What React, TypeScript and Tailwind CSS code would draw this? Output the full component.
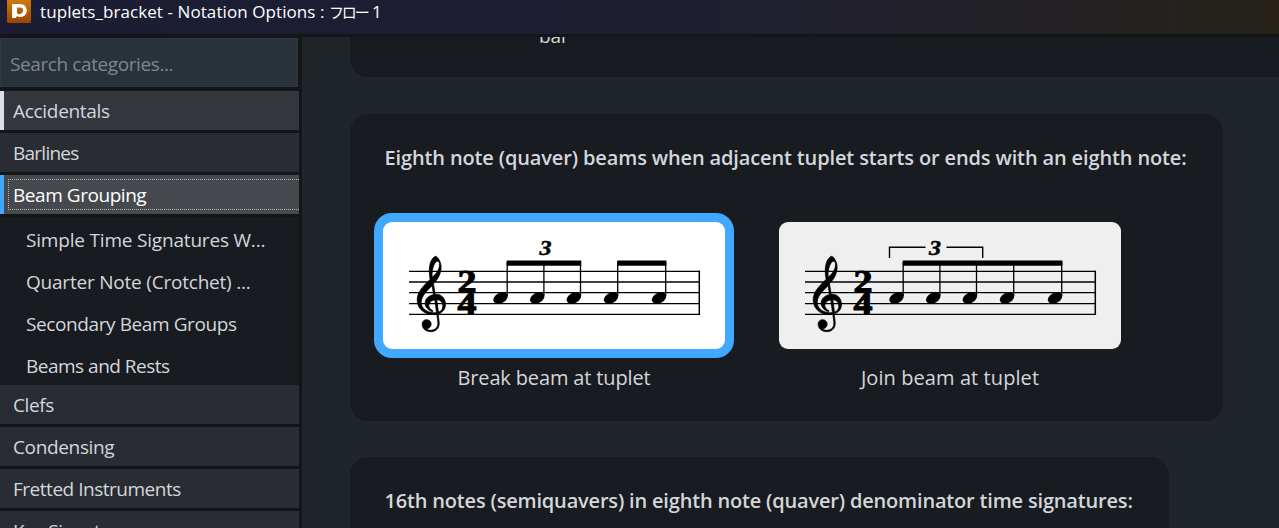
type Category = {
  name: string;
  className: string;
  children?: { name: string; className: string }[];
};

const categories: Category[] = [
  { name: "Accidentals", className: "tracking-[-0.3px]" },
  { name: "Barlines", className: "tracking-[-0.75px]" },
  {
    name: "Beam Grouping",
    className: "tracking-[-0.45px]",
    children: [
      { name: "Simple Time Signatures W...", className: "tracking-[-0.19px]" },
      { name: "Quarter Note (Crotchet) ...", className: "tracking-[-0.21px]" },
      { name: "Secondary Beam Groups", className: "tracking-[-0.4px]" },
      { name: "Beams and Rests", className: "tracking-[-0.5px]" },
    ],
  },
  { name: "Clefs", className: "tracking-[-0.4px]" },
  { name: "Condensing", className: "tracking-[-0.35px]" },
  { name: "Fretted Instruments", className: "tracking-[-0.48px]" },
  { name: "Key Signatures", className: "tracking-[-0.4px]" },
];

function AppLogo() {
  return (
    <svg width="24" height="24" viewBox="0 0 24 24" className="shrink-0">
      <defs>
        <linearGradient id="logo" x1="0" y1="0" x2="0" y2="1">
          <stop offset="0" stopColor="#d57a0d" />
          <stop offset="1" stopColor="#9c4300" />
        </linearGradient>
      </defs>
      <rect width="24" height="24" rx="1.5" fill="url(#logo)" />
      <path
        fillRule="evenodd"
        d="M5 5H13C17.200 5 19.800 7.800 19.800 11.500C19.800 15.300 17.200 18 13.200 18H12.200C11.400 18 10.700 17.600 10.200 17L8.600 19H5ZM10 8.500V13.500C10 14.700 10.900 15.300 11.900 15.200C14.500 15 16.200 13.400 16.200 11.300C16.200 9.500 15 8.500 13 8.500Z"
        fill="#fff"
      />
    </svg>
  );
}

function TrebleClef() {
  return (
    <g transform="translate(28.500 28) scale(0.3333)">
      <path
        fillRule="evenodd"
        stroke="currentColor"
        strokeWidth="2.200"
        d="M74 19C84 27 89 40 89 53C88 72 79 88 66 101L71 133C88 131 102 144 102 163C102 178 93 188 80 192L83 216C85 234 74 245 58 245C43 245 32 236 32 222C32 214 38 209 45 209C53 209 59 215 59 222C59 230 53 236 45 236.500C49 240 53 241 58 241C73 240 80 231 79 216L76 193C48 198 17 182 17 150C17 125 36 108 56 88C52 70 52 52 57 37C61 27 68 18 74 19ZM79 34C70 33 60 55 62 82C76 70 84 57 84 45C84 38 83 35 79 34ZM62 107C48 121 30 136 29 157C29 177 50 191 75 188L70 150C58 151 51 160 52 168C53 175 59 179 65 183L63 185C50 181 40 171 41 158C42 145 53 136 66 134ZM76 149L81 187C89 184 94 177 94 168C94 157 88 150 76 149Z"
      />
    </g>
  );
}

function Score({ joined = false }: { joined?: boolean }) {
  const notes = [118, 154.700, 191.300, 228.500, 276.500];
  return (
    <svg width="342" height="127" viewBox="0 0 342 127" className="block text-black">
      {[49.400, 60, 70.700, 81.600, 92.300].map((y) => (
        <path key={y} d={`M26 ${y}H317`} stroke="currentColor" strokeWidth="1.300" />
      ))}
      <path d="M316.300 48.800V93" stroke="currentColor" strokeWidth="1.500" />
      <TrebleClef />
      {/* time signature */}
      <g fontFamily="Liberation Serif, serif" fontWeight="700" stroke="currentColor" strokeWidth="1">
        <text x="74.500" y="70.200" fontSize="31" textLength="19" lengthAdjust="spacingAndGlyphs">2</text>
        <text x="74.500" y="92" fontSize="31" textLength="19" lengthAdjust="spacingAndGlyphs">4</text>
      </g>
      {notes.map((x) => (
        <g key={x}>
          <ellipse cx={x - 0.500} cy="76" rx="7.600" ry="5.200" transform={`rotate(-28 ${x - 0.500} 76)`} />
          <path d={`M${x + 6.200} 40V74`} stroke="currentColor" strokeWidth="1.300" />
        </g>
      ))}
      {joined ? (
        <path d="M123.700 38.500H283.400V43.700H123.700z" />
      ) : (
        <path d="M123.700 38.500H198.200V43.700H123.700zM234.200 38.500H283.400V43.700H234.200z" />
      )}
      <text
        x={joined ? 150 : 156.500}
        y="32.800"
        fontFamily="Liberation Serif, serif"
        fontSize="22"
        fontWeight="700"
        fontStyle="italic"
        stroke="currentColor"
        strokeWidth="0.500"
        textLength="12"
        lengthAdjust="spacingAndGlyphs"
      >
        3
      </text>
      {joined && (
        <path d="M110.500 36V25.300H146.500M167.500 25.300H203.700V36" fill="none" stroke="currentColor" strokeWidth="1.400" />
      )}
    </svg>
  );
}

function Sidebar() {
  return (
    <aside className="w-[302px] shrink-0 bg-[#131516] pt-px">
      <div className="flex h-[49px] w-[298px] items-center border border-[#30373d] bg-[#29323a] pt-0.5 pl-[9px] text-[#7f868c]">
        <span className="tracking-[-0.4px]">Search categories...</span>
      </div>
      <ul className="mt-1 w-[299px]">
        {categories.map((category) => {
          const current = category.name === "Beam Grouping";
          const first = category.name === "Accidentals";
          return (
            <li key={category.name}>
              <div
                className={`mb-[3px] flex h-[39px] items-center border-l-4 ${
                  current
                    ? "border-[#40a9ff] bg-[#45494d] text-white"
                    : first
                      ? "border-[#dcdfe5] bg-[#34363e]"
                      : "border-[#292d33] bg-[#292d33]"
                }`}
              >
                <span
                  className={`${category.className} ${
                    current
                      ? "ml-1 flex h-[31px] flex-1 items-center border border-r-0 border-dotted border-[#b5b5b5] pl-1"
                      : "pl-[9px]"
                  }`}
                >
                  {category.name}
                </span>
              </div>
              {category.children && (
                <ul className="h-[168px] bg-[#181b20]">
                  {category.children.map((child) => (
                    <li key={child.name} className="flex h-[42px] items-center pt-1 pl-[26px]">
                      <span className={child.className}>{child.name}</span>
                    </li>
                  ))}
                </ul>
              )}
            </li>
          );
        })}
      </ul>
    </aside>
  );
}

export default function App() {
  return (
    <div className="flex h-[528px] w-[1279px] flex-col overflow-hidden bg-[#202529] font-['Open_Sans','Noto_Sans',sans-serif] text-[19px] leading-[26px] whitespace-nowrap text-[#d3d7db]">
      <header className="flex h-[37px] shrink-0 border-b-[3px] border-[#131516] bg-linear-to-r from-[#1a1d33] via-[#1e1e33] to-[#26221a] pl-[7px]">
        <div className="-mt-px"><AppLogo /></div>
        <h1 className="ml-[9px] text-[17px] leading-6 tracking-[0.08px] text-white">
          tuplets_bracket - Notation Options :{" "}
          <span className="font-['Noto_Sans_CJK_JP',sans-serif] text-[15px] leading-none tracking-[-2.2px]">フロー</span>
          {" "}1
        </h1>
      </header>

      <div className="flex min-h-0 flex-1">
        <Sidebar />
        <main className="flex-1 overflow-hidden pl-12">
          <section className="h-10 overflow-hidden rounded-bl-[18px] bg-[#181b20] pl-[189px]">
            <p className="-mt-3.5 tracking-[-0.1px]">bar</p>
          </section>

          <section className="mt-[37px] h-[307px] w-[873px] rounded-[18px] bg-[#181b20] pt-[30px]">
            <h2 className="pl-[34.5px] text-[20px] leading-[27px] font-semibold tracking-[-0.135px]">
              Eighth note (quaver) beams when adjacent tuplet starts or ends with an eighth note:
            </h2>
            <div className="mt-[42px] flex gap-9 pl-6">
              <figure className="text-center">
                <div className="rounded-[18px] bg-[#40a9ff] p-[9px]">
                  <div className="overflow-hidden rounded-[9px] bg-white">
                    <Score />
                  </div>
                </div>
                <figcaption className="mt-[7px] text-[20px] tracking-[-0.15px]">Break beam at tuplet</figcaption>
              </figure>
              <figure className="text-center">
                <div className="p-[9px]">
                  <div className="overflow-hidden rounded-[9px] bg-[#efefef]">
                    <Score joined />
                  </div>
                </div>
                <figcaption className="mt-[7px] text-[20px] tracking-[0.08px]">Join beam at tuplet</figcaption>
              </figure>
            </div>
          </section>

          <section className="mt-9 h-[120px] w-[819px] rounded-[18px] bg-[#181b20] pt-[30px]">
            <h2 className="pl-[34.5px] text-[20px] leading-[27px] font-semibold tracking-[-0.18px]">
              16th notes (semiquavers) in eighth note (quaver) denominator time signatures:
            </h2>
          </section>
        </main>
      </div>
    </div>
  );
}
